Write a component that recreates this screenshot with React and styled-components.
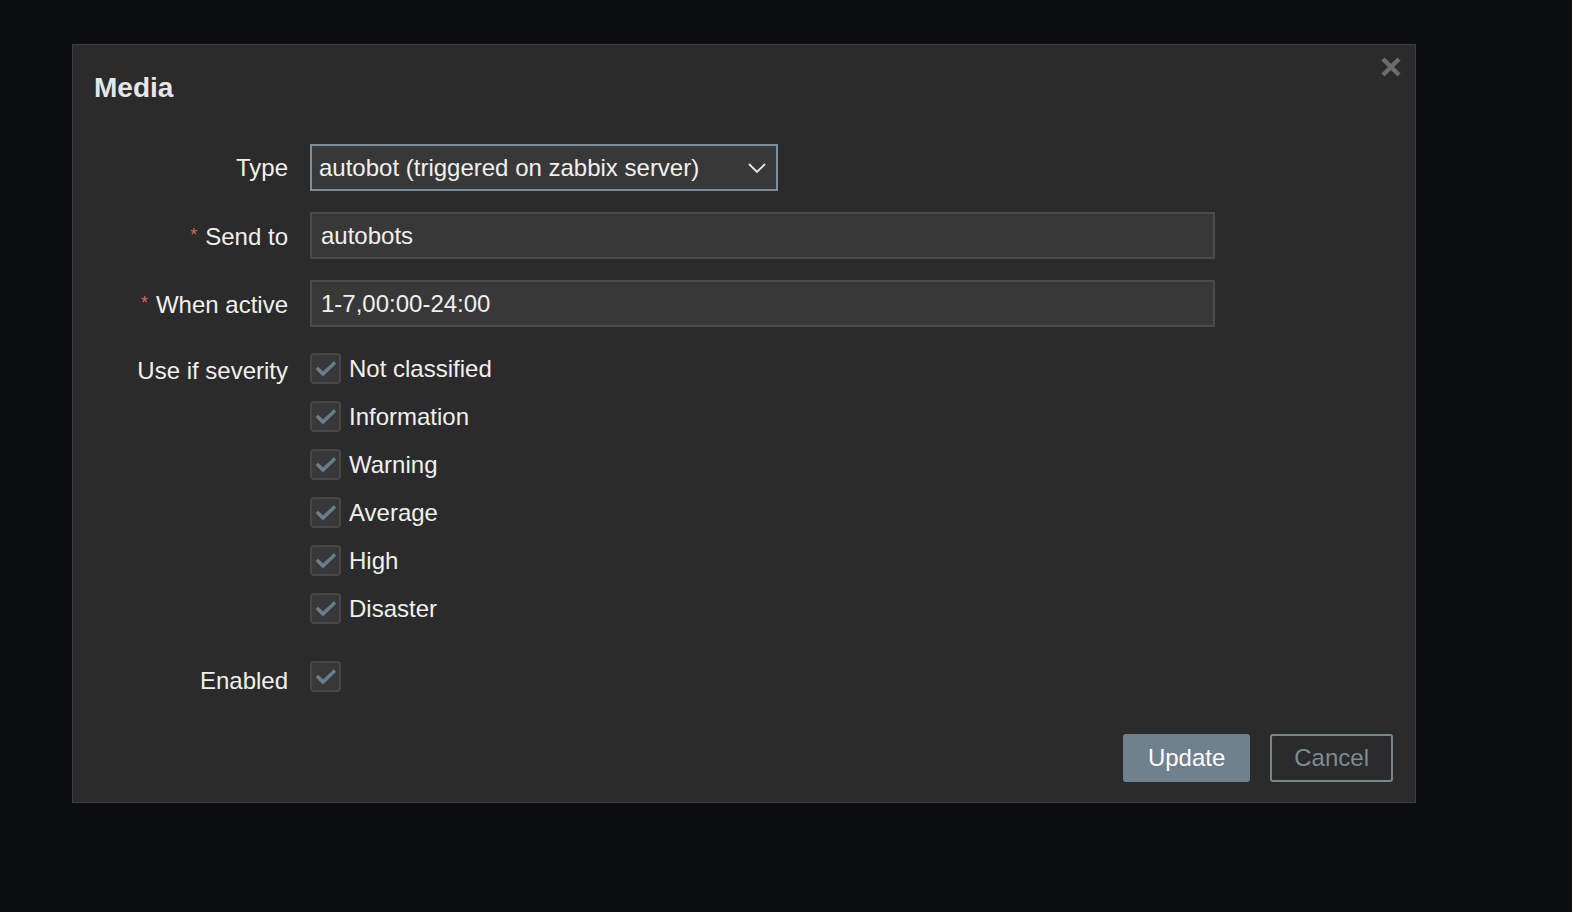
import styled, { createGlobalStyle } from "styled-components";

const GlobalStyle = createGlobalStyle`
  html, body {
    margin: 0;
    padding: 0;
    background: #0b0d10;
    font-family: "Liberation Sans", Arial, sans-serif;
  }
`;

const Page = styled.div`
  width: 1572px;
  height: 912px;
  padding: 44px 0 0 72px;
  box-sizing: border-box;
`;

const Dialog = styled.div`
  position: relative;
  width: 1344px;
  height: 759px;
  box-sizing: border-box;
  background: #2b2b2b;
  border: 1px solid #3f3f3f;
  padding: 27px 22px 20px 0;
  display: flex;
  flex-direction: column;
`;

const Title = styled.h2`
  margin: 0 0 40px 21px;
  font-size: 28px;
  line-height: 32px;
  font-weight: bold;
  color: #e6e6e6;
`;

const Close = styled.button`
  position: absolute;
  top: 11px;
  right: 13px;
  width: 22px;
  height: 22px;
  padding: 0;
  border: 0;
  background: none;
  cursor: pointer;
`;

const Form = styled.div`
  display: grid;
  grid-template-columns: 215px 1fr;
  column-gap: 22px;
  row-gap: 21px;
  align-items: start;
`;

const Label = styled.div`
  text-align: right;
  font-size: 24px;
  color: #f0f0f0;
  height: ${(p) => p.$h || 47}px;
  line-height: ${(p) => p.$h || 47}px;
  margin-top: ${(p) => p.$mt || 0}px;
  white-space: nowrap;
`;

const Star = styled.span`
  color: #d9645f;
  font-size: 18px;
  vertical-align: 4px;
  margin-right: 8px;
`;

const SelectBox = styled.div`
  width: 468px;
  height: 47px;
  box-sizing: border-box;
  border: 2px solid #7a8e9c;
  background: #383838;
  display: flex;
  align-items: center;
  justify-content: space-between;
  padding: 0 9px 0 7px;
  font-size: 24px;
  color: #f0f0f0;
`;

const TextInput = styled.div`
  width: 905px;
  height: 47px;
  box-sizing: border-box;
  border: 2px solid #4b4b4b;
  background: #383838;
  display: flex;
  align-items: center;
  padding: 0 9px;
  font-size: 24px;
  color: #f0f0f0;
`;

const CheckList = styled.div`
  display: flex;
  flex-direction: column;
  gap: 17px;
  margin-top: ${(p) => p.$mt || 0}px;
`;

const CheckRow = styled.label`
  display: flex;
  align-items: center;
  gap: 8px;
  height: 31px;
  font-size: 24px;
  color: #f0f0f0;
`;

const Box = styled.span`
  width: 31px;
  height: 31px;
  box-sizing: border-box;
  border: 2px solid #474747;
  border-radius: 4px;
  background: #383838;
  display: flex;
  align-items: center;
  justify-content: center;
`;

const Footer = styled.div`
  margin-top: auto;
  display: flex;
  justify-content: flex-end;
  gap: 20px;
`;

const Button = styled.button`
  height: 48px;
  padding: 0 ${(p) => (p.$primary ? 23 : 22)}px;
  font-family: inherit;
  font-size: 24px;
  border-radius: 3px;
  border: 2px solid ${(p) => (p.$primary ? "#6f818d" : "#76878f")};
  background: ${(p) => (p.$primary ? "#6f818d" : "transparent")};
  color: ${(p) => (p.$primary ? "#ffffff" : "#7c8c96")};
  cursor: pointer;
`;

const Check = () => (
  <svg width="22" height="17" viewBox="0 0 22 17">
    <path d="M2 8 L8 14 L20 2.5" fill="none" stroke="#647e8e" strokeWidth="3.6" />
  </svg>
);

const Checkbox = ({ children }) => (
  <CheckRow>
    <Box>
      <Check />
    </Box>
    {children}
  </CheckRow>
);

const severities = ["Not classified", "Information", "Warning", "Average", "High", "Disaster"];

export default function App() {
  return (
    <>
      <GlobalStyle />
      <Page>
        <Dialog>
          <Close aria-label="Close">
            <svg width="22" height="22" viewBox="0 0 22 22">
              <path d="M3 3 L19 19 M19 3 L3 19" stroke="#6c6c6c" strokeWidth="4.5" />
            </svg>
          </Close>
          <Title>Media</Title>
          <Form>
            <Label>Type</Label>
            <SelectBox>
              <span>autobot (triggered on zabbix server)</span>
              <svg width="20" height="12" viewBox="0 0 20 12">
                <path d="M2 2 L10 10 L18 2" fill="none" stroke="#e8e8e8" strokeWidth="1.8" />
              </svg>
            </SelectBox>

            <Label>
              <Star>*</Star>Send to
            </Label>
            <TextInput>autobots</TextInput>

            <Label>
              <Star>*</Star>When active
            </Label>
            <TextInput>1-7,00:00-24:00</TextInput>

            <Label $h={31} $mt={7}>Use if severity</Label>
            <CheckList $mt={5}>
              {severities.map((s) => (
                <Checkbox key={s}>{s}</Checkbox>
              ))}
            </CheckList>

            <Label $h={31} $mt={20}>Enabled</Label>
            <CheckList $mt={16}>
              <Checkbox />
            </CheckList>
          </Form>
          <Footer>
            <Button $primary>Update</Button>
            <Button>Cancel</Button>
          </Footer>
        </Dialog>
      </Page>
    </>
  );
}
